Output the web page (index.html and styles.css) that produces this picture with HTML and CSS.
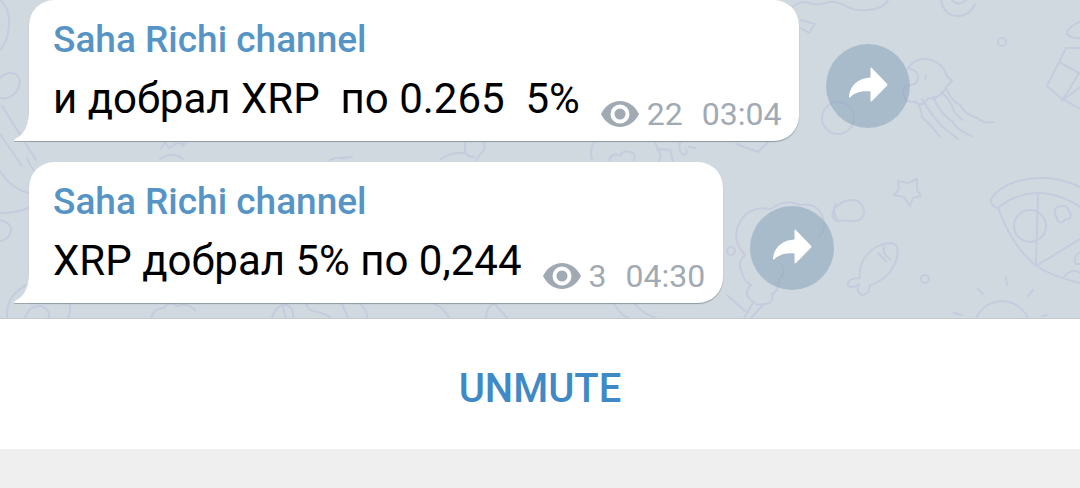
FILE: index.html
```html
<!DOCTYPE html>
<html lang="ru">
<head>
<meta charset="utf-8">
<meta name="viewport" content="width=device-width, initial-scale=1">
<title>Saha Richi channel</title>
<link rel="stylesheet" href="styles.css">
</head>
<body>
<svg class="sprite" aria-hidden="true">
  <symbol id="eye" viewBox="0 0 38 26">
    <path fill-rule="evenodd" d="M0 13C4 5 11 0 19 0s15 5 19 13c-4 8-11 13-19 13S4 21 0 13zM19 3.500a9.500 9.500 0 1 0 0 19 9.500 9.500 0 0 0 0-19z"/>
    <circle cx="19" cy="13" r="5.500"/>
  </symbol>
  <symbol id="share" viewBox="0 0 84 84">
    <path d="M44.500 24.500q.3-1.600 1.600-.3L61 39.800q1 1 0 2L46 57q-1.500 1.200-1.500-.6V47.500C34 46.500 28 49.500 24.300 53.200q-1.600 1-1.300-.8C24 41 33 34 44.500 33.500z"/>
  </symbol>
  <symbol id="tail" viewBox="0 0 16 34">
    <path d="M16 0h-1C15 18 11 27 1 32q-2 2 0 2h15z"/>
  </symbol>
</svg>
<main class="chat">
  <svg class="wallpaper" viewBox="0 0 1080 319" preserveAspectRatio="xMaxYMin slice" aria-hidden="true">
    <!-- left edge -->
    <path d="M0 0q10 8 9 24-1 18-9 26M0 78q8-8 17-3 6 7-1 17-7 8-16 6M2 106l34 54M0 134l22 32M27 158q5 13 12 17M0 171q10 17 28 22M0 213q18 0 28-5M0 220q12 3 11 11-2 9-11 10M7 318q-2-22 21-34M25 318q4-13 16-12 9 3 8 12M69 303q3 6-1 15"/>
    <path d="M161 149l4-7 4 6 8-5 8 1-3 2M160 159q12-8 23 0M151 318q3-10 13-10 5-8 13-2 10-4 18 4M272 318q4-14 15-13 7 3 6 13"/>
    <!-- strip between the bubbles -->
    <path d="M330 160q8-4 14-1M338 158l14-1M440 160q10-9 26-7M465 142v11q4 4 9 4M483 142q4 7-2 11l-5 7M592 160q-3-14 4-19M609 160q4-9 11-4 3-7 13-3 3 3 1 7M655 142l3 7 12 1M657 149q6 6 2 12M670 150l3 11M680 142q-2 12 5 13 3-3 1-6M689 147l6 1M736 144l22 8 10-10"/>
    <!-- strip under the second bubble -->
    <path d="M282 304q2 8 4 14M306 304q3 8 12 8 8 2 13 6M342 304l6 14M360 304q8 7 7 14M435 304q10 5 14 14M486 318q0-12 9-14l12 14M614 304q6 10 14 14M635 304q8 10 21 14"/>
    <!-- balloon string and ball near the top -->
    <path d="M793 7q9-8 19-3 8 1 14-1c14-5 18 6 33 7 17 2 28-6 29-10M801 20l14 4-6 9-8-5M941 0q3 15 16 16 13 0 18-12M952 0q6 7 14 0"/>
    <!-- jellyfish -->
    <path d="M908 68q8-12 24-8 12 5 15 16l5 5-5 5q-7 14-19 12-5 10-13 4-10 1-12-8 0-8 5-9M909 69q9 1 9 8 0 8-9 8M926 76l-1 3M916 101q6 9 6 16 10 9 18 20M922 99q12 20 22 29l14 11M933 97q8 18 19 24 4 9 20 15M941 92q10 8 13 19 5 7 9 9M946 87q4 13 14 18 5 9 17 13 7 6 16 4"/>
    <circle cx="1002" cy="42" r="4"/>
    <circle cx="838" cy="118" r="16"/>
    <!-- gift -->
    <path d="M1080 48h-14l-7 14-12 24 14 12 19 11M1059 62l20 11-17 28 18-14M1080 22q-12 4-13 12 6 5 13 4"/>
    <!-- pebble and star -->
    <path d="M836 221q-6-4-2-12 8-10 21-9 9 3 9 13-2 9-11 8-9-1-17 0zM898 181l10 2 9-4v11l4 6-8 2-3 8-6-9-10-2 5-6z"/>
    <!-- fish -->
    <path d="M860 278c-2-17 10-33 30-35q10 0 7 14c-2 12-14 25-27 28q-1 10-8 10-7-3-3-11-6 5-11 2-1-8 12-8zM878 253l8 8M884 247q-2 7 7 13"/>
    <circle cx="925" cy="279" r="4"/>
    <!-- pizza -->
    <path d="M991 199q8-12 24-17 34-10 65 5M991 199q-1 7 7 9 16-14 38-15 24 0 44 14M998 208q14 38 38 58 18 11 44 17M1038 193l-2 73 44-27"/>
    <circle cx="1030" cy="226" r="16"/>
    <path d="M1055 213q-2-6 6-7 6-1 7 4 5 4 1 9-5 0-6 3-6 1-6-4-2-2-2-5zM1080 252q-8 5-4 12h4M1064 277q8-10 16-4"/>
    <!-- sun -->
    <path d="M976 318q8-16 26-17 18 1 26 17M978 289l5 5M1006 277l1 8M1033 290l-5 6M954 313l8 2M1042 316l5-1"/>
    <!-- ice cream -->
    <path d="M745 255q-13-14-7-29 9-21 33-17 14-11 29-4 16-3 22 10 6 14-3 21M745 255q-9 9-3 17 1 9 9 13-8 8-1 14 6 8 14 5 10 0 8-10 8-4 7-15 7-5 3-14M744 318l10-17M751 318l13-14M727 295l18 16M836 204q-5 9 3 17"/>
    <circle cx="731" cy="251" r="4"/>
  </svg>
  <article class="message">
    <div class="bubble">
      <svg class="tail" aria-hidden="true"><use href="#tail"/></svg>
      <h2 class="sender">Saha Richi channel</h2>
      <div class="content">
        <p class="text">и добрал XRP&nbsp; по 0.265&nbsp; 5%</p>
        <div class="meta">
          <svg class="eye" aria-hidden="true"><use href="#eye"/></svg>
          <span class="views">22</span>
          <time datetime="03:04">03:04</time>
        </div>
      </div>
    </div>
    <button class="share" type="button" aria-label="Share"><svg aria-hidden="true"><use href="#share"/></svg></button>
  </article>
  <article class="message">
    <div class="bubble">
      <svg class="tail" aria-hidden="true"><use href="#tail"/></svg>
      <h2 class="sender">Saha Richi channel</h2>
      <div class="content">
        <p class="text">XRP добрал 5% по 0,244</p>
        <div class="meta">
          <svg class="eye" aria-hidden="true"><use href="#eye"/></svg>
          <span class="views">3</span>
          <time datetime="04:30">04:30</time>
        </div>
      </div>
    </div>
    <button class="share" type="button" aria-label="Share"><svg aria-hidden="true"><use href="#share"/></svg></button>
  </article>
</main>
<button class="unmute" type="button">UNMUTE</button>
</body>
</html>
```
FILE: styles.css
```css
* {
  box-sizing: border-box;
}

body {
  margin: 0;
  background: #efefef;
  font-family: Roboto, "Noto Sans", sans-serif;
}

button {
  border: 0;
  padding: 0;
  font: inherit;
  cursor: pointer;
}

.sprite {
  position: absolute;
  width: 0;
  height: 0;
}

.chat {
  position: relative;
  display: flex;
  flex-direction: column;
  gap: 21px;
  padding: 0 28px 15px 29px;
  overflow: hidden;
  background: #d0d9e0;
  border-bottom: 1px solid #c2c8cb;
}

.wallpaper {
  position: absolute;
  inset: 0;
  width: 100%;
  height: 100%;
  fill: none;
  stroke: #c6cbde;
  stroke-width: 2;
  stroke-linecap: round;
  stroke-linejoin: round;
}

.message {
  position: relative;
  display: flex;
  align-items: flex-end;
  gap: 27px;
}

.bubble {
  position: relative;
  padding: 16px 18px 8px 24px;
  background: #fff;
  border-radius: 25px 25px 25px 0;
  box-shadow: 0 1px 1px #8d989f;
}

.tail {
  position: absolute;
  left: -15px;
  bottom: 0;
  width: 16px;
  height: 34px;
  fill: #fff;
  filter: drop-shadow(0 1px 0 #9ca6ad);
}

.sender {
  margin: 0;
  color: #5694c6;
  font-size: 37px;
  font-weight: 500;
  line-height: 48px;
}

.content {
  display: flex;
  align-items: flex-end;
  gap: 21px;
}

.text {
  margin: 0;
  padding: 5px 0 4px;
  color: #000;
  font-size: 42px;
  line-height: 60px;
}

.meta {
  display: flex;
  align-items: center;
  color: #a1aab3;
  font-size: 32px;
  line-height: 38px;
}

.eye {
  width: 38px;
  height: 26px;
  margin-right: 8px;
  fill: #a1aab3;
}

.views {
  margin-right: 19px;
}

.share {
  flex: none;
  width: 84px;
  height: 84px;
  margin-bottom: 13px;
  border-radius: 50%;
  background: rgba(133, 160, 182, 0.52);
}

.share svg {
  display: block;
  width: 84px;
  height: 84px;
  fill: #fff;
}

.unmute {
  display: block;
  width: 100%;
  padding: 46px 0 36px;
  background: #fff;
  color: #3f8ac6;
  font-size: 40px;
  font-weight: 500;
  line-height: 48px;
}
```
